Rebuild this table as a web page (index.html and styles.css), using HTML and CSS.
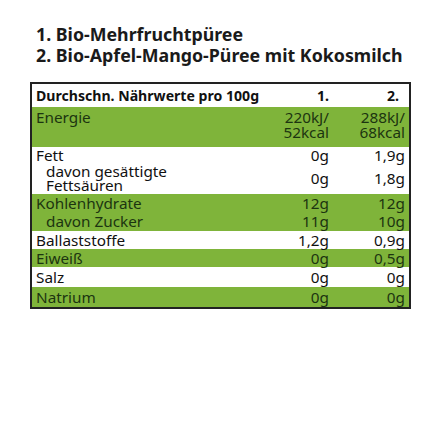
FILE: index.html
```html
<!DOCTYPE html>
<html lang="de">
<head>
<meta charset="utf-8">
<link rel="stylesheet" href="styles.css">
</head>
<body>
<div class="page">
  <h1 class="title">1. Bio-Mehrfruchtpüree<br>2. Bio-Apfel-Mango-Püree mit Kokosmilch</h1>
  <table class="nutri">
    <colgroup><col class="c-lbl"><col class="c-v1"><col class="c-v2"></colgroup>
    <thead>
      <tr class="head"><th class="lbl">Durchschn. Nährwerte pro 100g</th><th class="v1">1.</th><th class="v2">2.</th></tr>
    </thead>
    <tbody>
      <tr class="g energy"><td class="lbl">Energie</td><td class="v1">220kJ/<br>52kcal</td><td class="v2">288kJ/<br>68kcal</td></tr>
      <tr class="w short"><td class="lbl">Fett</td><td class="v1">0g</td><td class="v2">1,9g</td></tr>
      <tr class="w two"><td class="lbl sub">davon gesättigte<br>Fettsäuren</td><td class="v1">0g</td><td class="v2">1,8g</td></tr>
      <tr class="g"><td class="lbl">Kohlenhydrate</td><td class="v1">12g</td><td class="v2">12g</td></tr>
      <tr class="g mid"><td class="lbl sub">davon Zucker</td><td class="v1">11g</td><td class="v2">10g</td></tr>
      <tr class="w"><td class="lbl">Ballaststoffe</td><td class="v1">1,2g</td><td class="v2">0,9g</td></tr>
      <tr class="g"><td class="lbl">Eiweiß</td><td class="v1">0g</td><td class="v2">0,5g</td></tr>
      <tr class="w tall"><td class="lbl">Salz</td><td class="v1">0g</td><td class="v2">0g</td></tr>
      <tr class="g tall"><td class="lbl">Natrium</td><td class="v1">0g</td><td class="v2">0g</td></tr>
    </tbody>
  </table>
</div>
</body>
</html>
```
FILE: styles.css
```css
html, body {
  margin: 0;
  padding: 0;
  background: #ffffff;
}
.page {
  padding: 24px 30px 0 30px;
  font-family: "Noto Sans", "DejaVu Sans", sans-serif;
  color: #111;
}
.title {
  margin: 0 0 16px 6px;
  font-size: 17.8px;
  line-height: 21px;
  font-weight: 700;
  color: #1a1a1a;
}
.nutri {
  width: 381px;
  table-layout: fixed;
  border-collapse: collapse;
  border: 2px solid #222;
  font-size: 15.3px;
  line-height: 15px;
}
.c-lbl { width: 241px; }
.c-v1 { width: 60px; }
.c-v2 { width: 78px; }
.nutri th, .nutri td {
  padding: 2px 4px 1px 4px;
  vertical-align: middle;
  white-space: nowrap;
}
.nutri th {
  font-size: 14.1px;
  font-weight: 700;
  height: 20px;
  padding-top: 1px;
  padding-bottom: 2px;
}
.lbl { text-align: left; }
td.v1, th.v1 { text-align: right; padding-right: 3px; }
td.v2 { text-align: right; padding-right: 4px; }
th.v2 { text-align: right; padding-right: 10px; }
.g { background: #7fb43a; color: #1c3410; }
.w { background: #ffffff; color: #111; }
.energy td { vertical-align: top; padding-top: 3px; padding-bottom: 7px; line-height: 15px; }
.short td { padding-top: 1px; padding-bottom: 0; }
.two td { line-height: 14px; padding-top: 1px; padding-bottom: 2px; }
.mid td { padding-top: 2px; padding-bottom: 2px; }
.tall td { padding-top: 3px; padding-bottom: 2px; }
.sub { padding-left: 14px !important; }
```
